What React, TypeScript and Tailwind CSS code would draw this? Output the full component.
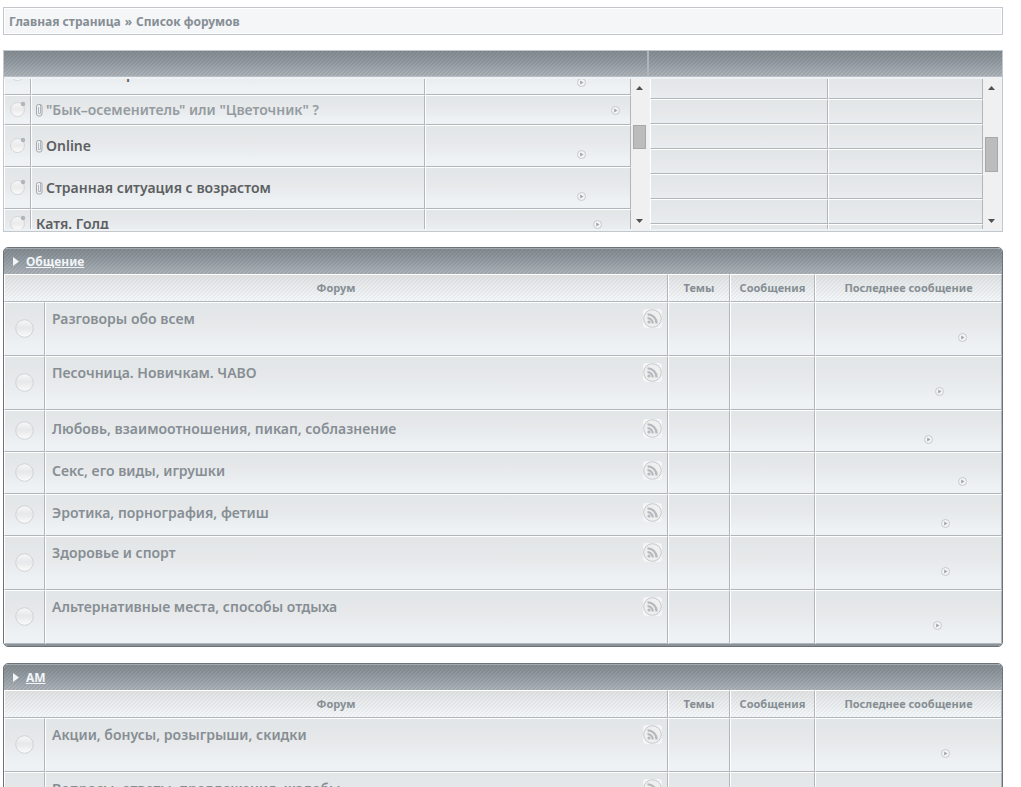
import React from "react";

const Arrow = () => (
  <svg width="9" height="9" viewBox="0 0 9 9" className="block" aria-hidden="true">
    <circle cx="4.5" cy="4.5" r="4" fill="#f3f4f5" stroke="#c6c9cc" />
    <path d="M3.2 2.6 6.5 4.5 3.2 6.4Z" fill="#a2a6aa" />
  </svg>
);

const Disc = () => (
  <svg width="19" height="19" viewBox="0 0 19 19" className="mx-auto block" aria-hidden="true">
    <defs>
      <linearGradient id="disc" x1="0" y1="0" x2="0" y2="1">
        <stop offset="0" stopColor="#f8f8f9" />
        <stop offset="0.45" stopColor="#e7e8e9" />
        <stop offset="0.6" stopColor="#ececed" />
        <stop offset="1" stopColor="#fcfcfc" />
      </linearGradient>
    </defs>
    <circle cx="9.5" cy="9.5" r="8.8" fill="url(#disc)" stroke="#d0d2d5" />
  </svg>
);

const TopicDisc = () => (
  <svg width="17" height="17" viewBox="0 0 17 17" className="mx-auto block" aria-hidden="true">
    <defs>
      <linearGradient id="topic-disc" x1="0" y1="0" x2="0" y2="1">
        <stop offset="0" stopColor="#f6f6f7" />
        <stop offset="0.5" stopColor="#ebebec" />
        <stop offset="1" stopColor="#fdfdfd" />
      </linearGradient>
    </defs>
    <circle cx="8.5" cy="8.5" r="7" fill="url(#topic-disc)" stroke="#d3d6d9" />
    <circle cx="14" cy="3" r="2.2" fill="#b0b5ba" />
  </svg>
);

const Clip = () => (
  <svg width="7" height="13" viewBox="0 0 7 13" className="shrink-0" aria-hidden="true">
    <rect x="0.5" y="0.5" width="5.5" height="11.5" rx="2" fill="#eef0f1" stroke="#a3a9ae" />
    <path d="M2.500 3v6.500h2V1" fill="none" stroke="#a3a9ae" strokeWidth="0.8" />
  </svg>
);

const Rss = () => (
  <svg width="19" height="19" viewBox="0 0 19 19" className="block" aria-hidden="true">
    <rect width="19" height="19" rx="3" fill="#f4f5f6" />
    <circle cx="9.5" cy="9.5" r="8.8" fill="#efefef" stroke="#c6c7c9" />
    <circle cx="6" cy="13" r="1.6" fill="#b5babe" />
    <path d="M4.500 9.200a5.200 5.200 0 0 1 5.300 5.300M4.500 5.400a9 9 0 0 1 9.100 9.100" fill="none" stroke="#b5babe" strokeWidth="2.3" />
  </svg>
);

const darkBar =
  "bg-[linear-gradient(135deg,rgba(60,70,76,0.11)_25%,transparent_25%,transparent_50%,rgba(60,70,76,0.11)_50%,rgba(60,70,76,0.11)_75%,transparent_75%),linear-gradient(#848c91,#969ea5_50%,#aeb4b9)] bg-[length:4px_4px,100%_100%]";
const lightBar =
  "bg-[linear-gradient(135deg,rgba(120,130,136,0.08)_25%,transparent_25%,transparent_50%,rgba(120,130,136,0.08)_50%,rgba(120,130,136,0.08)_75%,transparent_75%),linear-gradient(#e0e2e3,#f5f8f9)] bg-[length:4px_4px,100%_100%]";
const cell =
  "border-l border-t border-r border-b border-l-white border-t-white border-r-[#b0b6bc] border-b-[#b0b6bc] p-0";
const fill = "bg-[linear-gradient(#e2e6e7,#e6e8ea_38%,#eef2f5_85%)]";
const shortFill = "bg-[linear-gradient(#e2e6e7,#e6e8ea_60%,#e9edf0)]";

function ScrollBar({ thumb, label }: { thumb: string; label: string }) {
  return (
    <div className="flex w-[17px] shrink-0 flex-col bg-[#f0f0f0]">
      <button aria-label={`${label}: вверх`} className="flex h-[17px] items-center justify-center">
        <svg width="7" height="4" viewBox="0 0 7 4"><path d="M0 4 3.500 0 7 4Z" fill="#505050" /></svg>
      </button>
      <div className="flex-1">
        <div className={`mx-auto w-[13px] border border-[#a8a8a8] bg-[#bcbcbc] ${thumb}`} />
      </div>
      <button aria-label={`${label}: вниз`} className="flex h-[17px] items-center justify-center">
        <svg width="7" height="4" viewBox="0 0 7 4"><path d="M0 0 3.500 4 7 0Z" fill="#505050" /></svg>
      </button>
    </div>
  );
}

const topics = [
  { title: "р", row: "h-[42px]", color: "text-[#5c5f62]", indent: "pl-[94px]", arrow: "pr-11 pt-[17px]", clip: false },
  { title: "\"Бык–осеменитель\" или \"Цветочник\" ?", row: "h-[30px]", color: "text-[#959ca1]", indent: "pl-1", arrow: "pr-[10px]", clip: true },
  { title: "Online", row: "h-[42px]", color: "text-[#5c5f62]", indent: "pl-1", arrow: "pr-11 pt-[17px]", clip: true },
  { title: "Странная ситуация с возрастом", row: "h-[42px]", color: "text-[#5c5f62]", indent: "pl-1", arrow: "pr-11 pt-[17px]", clip: true },
  { title: "Катя. Голд", row: "h-[30px]", color: "text-[#5c5f62]", indent: "pl-1", arrow: "pr-7", clip: false },
];

function TopicPanels() {
  return (
    <section className="mt-[15px] mb-[15px] border border-[#c3c8cc] bg-[#eef2f5]">
      <div className="flex h-[26px] border-b border-[#b9bfc6]">
        <div className={`flex-1 border-r-2 border-[#aeb4b9] ${darkBar}`} />
        <div className={`w-[353px] ${darkBar}`} />
      </div>
      <div className="flex h-[154px] py-0.5">
        <div className="flex min-w-0 flex-1 overflow-hidden">
          <div className="min-w-0 flex-1 overflow-hidden">
            <table className="-mt-[26px] w-full table-fixed border-separate border-spacing-0">
              <colgroup><col className="w-[27px]" /><col /><col className="w-[206px]" /></colgroup>
              <tbody>
                {topics.map((t) => (
                  <tr key={t.title} className={t.row}>
                    <td className={`${cell} ${fill}`}><div className="pb-px"><TopicDisc /></div></td>
                    <td className={`${cell} ${fill}`}>
                      <div className={`flex items-center gap-[3px] ${t.indent}`}>
                        {t.clip && <Clip />}
                        <a href="#" className={`truncate text-[14px] leading-5 font-semibold ${t.color}`}>{t.title}</a>
                      </div>
                    </td>
                    <td className={`${cell} ${fill}`}>
                      <div className={`flex justify-end ${t.arrow}`}><Arrow /></div>
                    </td>
                  </tr>
                ))}
              </tbody>
            </table>
          </div>
          <ScrollBar thumb="mt-[29px] h-6" label="Темы" />
        </div>
        <div className="ml-0.5 flex w-[352px] overflow-hidden pr-0.5">
          <div className="min-w-0 flex-1 overflow-hidden">
            <table className="-mt-[5px] w-full table-fixed border-separate border-spacing-0">
              <colgroup><col /><col className="w-[155px]" /></colgroup>
              <tbody>
                {[0, 1, 2, 3, 4, 5, 6].map((n) => (
                  <tr key={n} className="h-[25px]">
                    <td className={`${cell} ${shortFill}`} />
                    <td className={`${cell} ${shortFill}`} />
                  </tr>
                ))}
              </tbody>
            </table>
          </div>
          <ScrollBar thumb="mt-[41px] h-[35px]" label="Список" />
        </div>
      </div>
    </section>
  );
}

type Forum = { title: string; tall: boolean; arrow: string };

const chat: Forum[] = [
  { title: "Разговоры обо всем", tall: true, arrow: "pr-[34px]" },
  { title: "Песочница. Новичкам. ЧАВО", tall: true, arrow: "pr-[57px]" },
  { title: "Любовь, взаимоотношения, пикап, соблазнение", tall: false, arrow: "pr-[68px]" },
  { title: "Секс, его виды, игрушки", tall: false, arrow: "pr-[34px]" },
  { title: "Эротика, порнография, фетиш", tall: false, arrow: "pr-[51px]" },
  { title: "Здоровье и спорт", tall: true, arrow: "pr-[51px]" },
  { title: "Альтернативные места, способы отдыха", tall: true, arrow: "pr-[59px]" },
];

const am: Forum[] = [
  { title: "Акции, бонусы, розыгрыши, скидки", tall: true, arrow: "pr-[51px]" },
  { title: "Вопросы, ответы, предложения, жалобы", tall: true, arrow: "pr-[51px]" },
];

function Category({ name, forums }: { name: string; forums: Forum[] }) {
  const th = `${cell} ${lightBar} h-7 text-[11px] font-bold leading-4 text-center`;
  return (
    <section className="mb-4 overflow-hidden rounded-[5px] border border-[#6b7379]">
      <h2 className={`flex h-[26px] items-center gap-[7px] border-t border-[#a3aaaf] pl-[9px] text-[12px] leading-4 font-bold text-[#f1f5f8] ${darkBar}`}>
        <svg width="6" height="9" viewBox="0 0 6 9" aria-hidden="true"><path d="M0 0 6 4.500 0 9Z" fill="#f1f5f8" /></svg>
        <a href="#" className="underline">{name}</a>
      </h2>
      <table className="w-full table-fixed border-separate border-spacing-0">
        <colgroup>
          <col className="w-[41px]" /><col /><col className="w-[62px]" /><col className="w-[85px]" /><col className="w-[187px]" />
        </colgroup>
        <thead>
          <tr>
            <th colSpan={2} className={th}>Форум</th>
            <th className={th}>Темы</th>
            <th className={th}>Сообщения</th>
            <th className={th}>Последнее сообщение</th>
          </tr>
        </thead>
        <tbody>
          {forums.map((f) => (
            <tr key={f.title} className={f.tall ? "h-[54px]" : "h-[42px]"}>
              <td className={`${cell} ${fill}`}><div className="pb-px"><Disc /></div></td>
              <td className={`${cell} ${fill} align-top`}>
                <div className={`flex items-start justify-between pr-[5px] pl-[6px] ${f.tall ? "pt-[6px]" : "pt-2"}`}>
                  <a href="#" className="text-[14px] leading-5 font-semibold">{f.title}</a>
                  <a href="#" aria-label={`RSS: ${f.title}`}><Rss /></a>
                </div>
              </td>
              <td className={`${cell} ${fill}`} />
              <td className={`${cell} ${fill}`} />
              <td className={`${cell} ${fill}`}>
                <div className={`flex justify-end pt-[17px] ${f.arrow}`}><Arrow /></div>
              </td>
            </tr>
          ))}
        </tbody>
      </table>
      <div className="h-0.5 bg-[#8b9398]" />
    </section>
  );
}

export default function App() {
  return (
    <main className="h-screen overflow-hidden bg-white pt-[7px] pr-[18px] pl-[3px] font-['Noto_Sans',sans-serif] text-[#868e94]">
      <nav className="border border-[#c3c7cb] bg-white p-px">
        <div className="flex h-6 items-center gap-1 bg-[#f5f6f8] pt-px pl-1 text-[12px] leading-4 font-bold">
          <a href="#">Главная страница</a>
          <span>»</span>
          <a href="#">Список форумов</a>
        </div>
      </nav>
      <TopicPanels />
      <Category name="Общение" forums={chat} />
      <Category name="АМ" forums={am} />
    </main>
  );
}
